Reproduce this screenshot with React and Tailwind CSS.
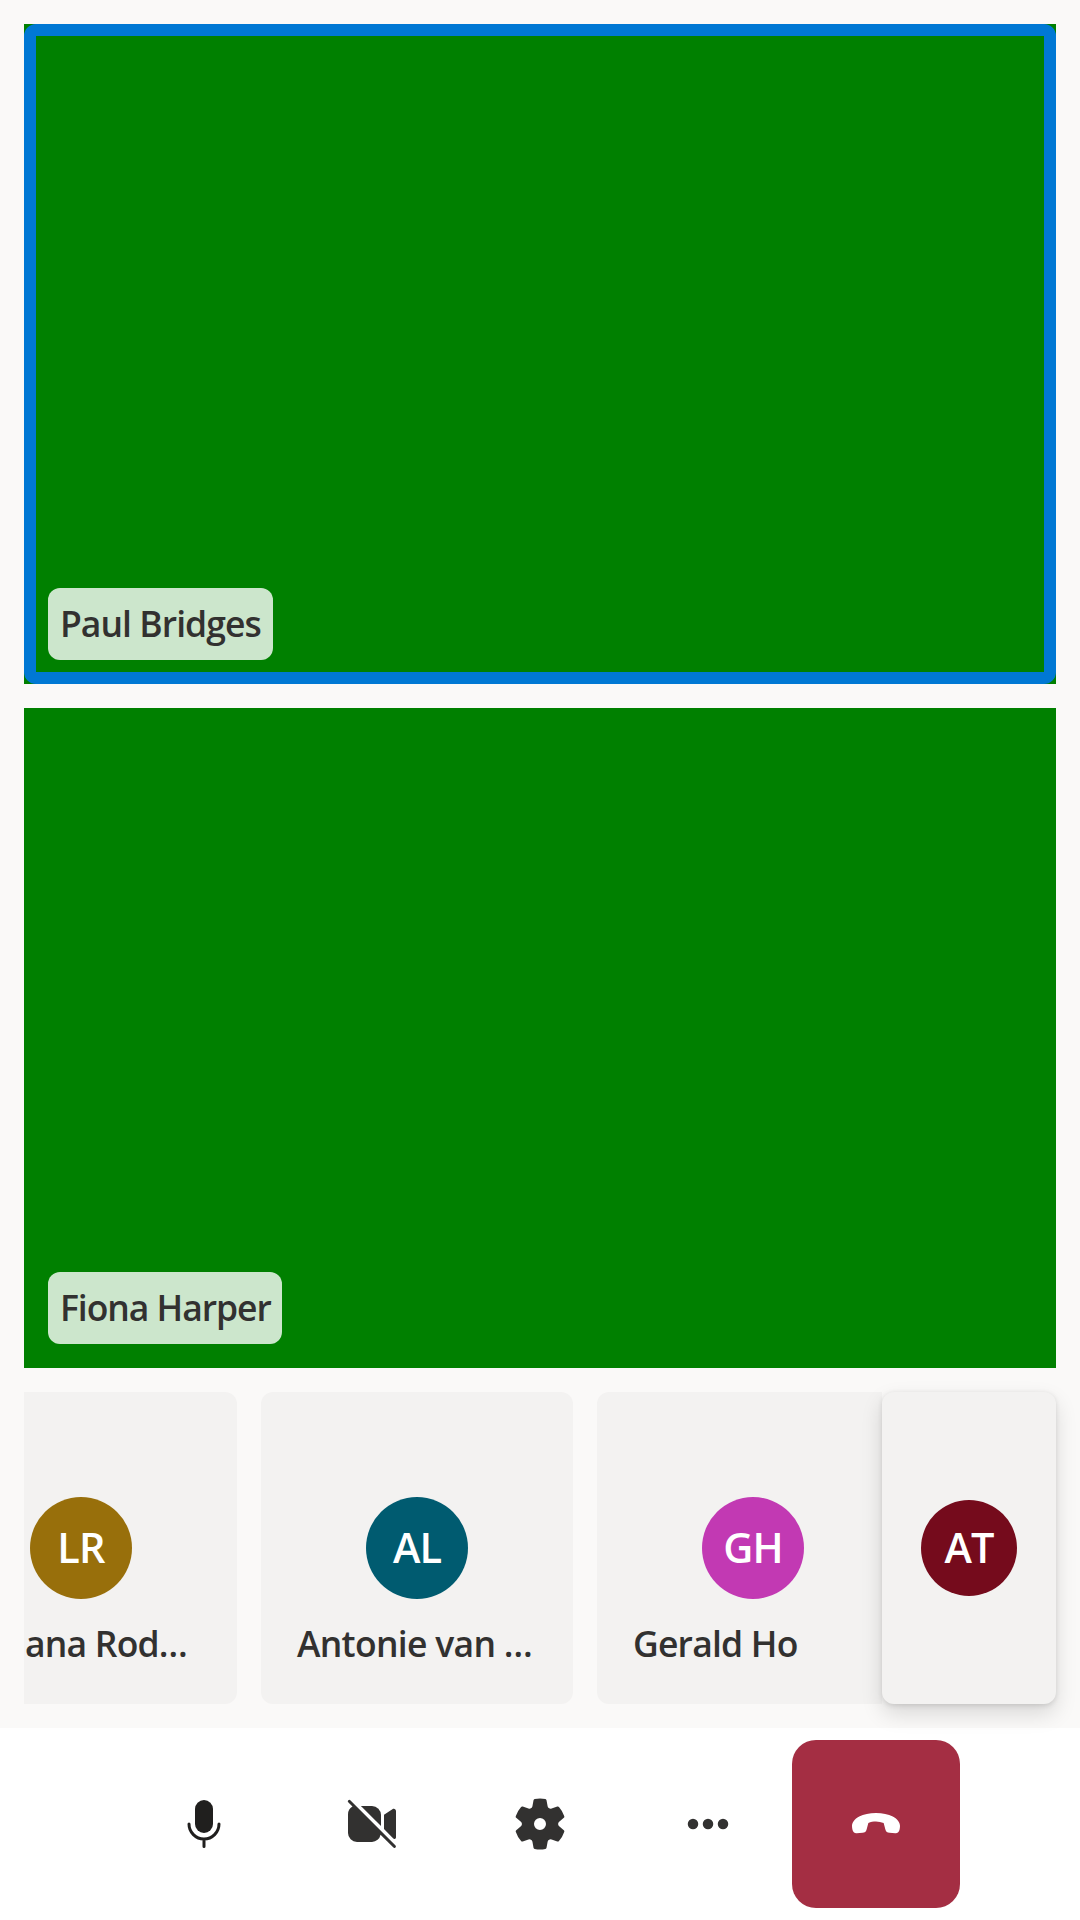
const remoteTiles = [
  { name: 'Paul Bridges', speaking: true, tracking: 'tracking-[-0.95px]', width: 'w-[225px]' },
  { name: 'Fiona Harper', speaking: false, tracking: 'tracking-[-1.05px]', width: 'w-[234px]' },
];

const audioTiles = [
  { name: 'ana Rod…', initials: 'LR', color: 'bg-[#986f0b]', tracking: 'pl-[64px] tracking-[-0.8px]' },
  { name: 'Antonie van …', initials: 'AL', color: 'bg-[#005b70]', tracking: 'tracking-[-0.7px]' },
  { name: 'Gerald Ho', initials: 'GH', color: 'bg-[#c239b3]', tracking: 'tracking-[-0.8px]' },
];

function VideoTile({ name, speaking, tracking, width }) {
  return (
    <div className="h-[660px] shrink-0 bg-[#008000]">
      <div
        className={`flex h-full items-end rounded-xl border-12 p-3 ${
          speaking ? 'border-[#0078d4]' : 'border-transparent'
        }`}
      >
        <div
          className={`flex h-[72px] items-center rounded-xl bg-white/80 px-3 pb-0.5 whitespace-nowrap text-[#323130] ${width}`}
        >
          <span className={`text-[35.5px] leading-12 font-[570] ${tracking}`}>{name}</span>
        </div>
      </div>
    </div>
  );
}

function AudioTile({ name, initials, color, tracking }) {
  return (
    <div className="flex h-[312px] w-[312px] shrink-0 flex-col rounded-xl bg-[#f3f2f1] px-9 pt-[105px]">
      <div
        className={`flex size-[102px] shrink-0 items-center justify-center self-center rounded-full pb-0.5 text-[41.5px] leading-[42px] font-[570] tracking-[-0.9px] text-white ${color}`}
      >
        {initials}
      </div>
      <div
        className={`mt-[19px] w-[240px] text-[35.5px] leading-[50px] font-[570] whitespace-nowrap text-[#323130] ${tracking}`}
      >
        {name}
      </div>
    </div>
  );
}

function Icon({ children, className = '' }) {
  return (
    <svg viewBox="0 0 20 20" className={`size-[60px] ${className}`} fill="currentColor" aria-hidden="true">
      {children}
    </svg>
  );
}

function ControlButton({ label, className = '', children }) {
  return (
    <button type="button" aria-label={label} className={`flex size-[168px] items-center justify-center ${className}`}>
      {children}
    </button>
  );
}

export default function App() {
  return (
    <div className="flex h-[1920px] w-[1080px] flex-col overflow-hidden bg-[#faf9f8] font-['Open_Sans','Noto_Sans',sans-serif]">
      <main className="flex h-[1728px] shrink-0 flex-col gap-6 p-6">
        {remoteTiles.map((tile) => (
          <VideoTile key={tile.name} {...tile} />
        ))}
        <div className="flex h-[312px]">
          <div className="flex w-[858px] shrink-0 justify-start gap-6 overflow-hidden">
            <div className="-ml-[99px] flex gap-6">
              {audioTiles.map((tile) => (
                <AudioTile key={tile.name} {...tile} />
              ))}
            </div>
          </div>
          <div className="relative z-10 flex w-[174px] shrink-0 items-center justify-center rounded-xl bg-[#f3f2f1] shadow-[0_9.6px_21.6px_rgba(0,0,0,0.132),0_1.8px_5.4px_rgba(0,0,0,0.108)]">
            <div className="flex size-24 items-center justify-center rounded-full bg-[#750b1c] pb-0.5 text-[41.5px] leading-[42px] font-[570] tracking-[-0.9px] text-white">
              AT
            </div>
          </div>
        </div>
      </main>

      <footer className="flex h-48 shrink-0 items-center justify-center bg-white text-[#323130]">
        <ControlButton label="Microphone">
          <Icon className="text-[#201f1e]">
            <rect x="7" y="2" width="6" height="11" rx="3" />
            <path
              d="M5 10a5 5 0 0 0 10 0M10 15.2v2.3"
              fill="none"
              stroke="currentColor"
              strokeLinecap="round"
            />
          </Icon>
        </ControlButton>
        <ControlButton label="Camera">
          <Icon>
            <path d="M2.85 2.15a.5.5 0 1 0-.7.7L3.5 4.2A3 3 0 0 0 2 6.8V13a3 3 0 0 0 3 3h5a3 3 0 0 0 2.84-2.45l4.3 4.3a.5.5 0 0 0 .71-.7l-15-15Z" />
            <path d="M6.3 4H10a3 3 0 0 1 3 3v3.7L6.3 4Z" />
            <path d="m14 11.7 3.1 3.15c.4.35.9.05.9-.45V5.75c0-.7-.65-1-1.2-.65L14 6.9v4.8Z" />
          </Icon>
        </ControlButton>
        <ControlButton label="Settings">
          <Icon>
            <path d="M1.91 7.38A8.5 8.5 0 0 1 3.7 4.3a.5.5 0 0 1 .54-.13l1.92.68a1 1 0 0 0 1.32-.76l.36-2a.5.5 0 0 1 .4-.4 8.53 8.53 0 0 1 3.55 0c.2.04.35.2.38.4l.37 2a1 1 0 0 0 1.32.76l1.92-.68a.5.5 0 0 1 .54.13 8.5 8.5 0 0 1 1.78 3.08c.06.2 0 .4-.15.54l-1.56 1.32a1 1 0 0 0 0 1.52l1.56 1.32a.5.5 0 0 1 .15.54 8.5 8.5 0 0 1-1.78 3.08.5.5 0 0 1-.54.13l-1.92-.68a1 1 0 0 0-1.32.76l-.37 2a.5.5 0 0 1-.38.4 8.53 8.53 0 0 1-3.56 0 .5.5 0 0 1-.39-.4l-.36-2a1 1 0 0 0-1.32-.76l-1.92.68a.5.5 0 0 1-.54-.13 8.5 8.5 0 0 1-1.78-3.08.5.5 0 0 1 .15-.54l1.56-1.32a1 1 0 0 0 0-1.52L2.06 7.92a.5.5 0 0 1-.15-.54ZM8 10a2 2 0 1 0 4 0 2 2 0 0 0-4 0Z" />
          </Icon>
        </ControlButton>
        <ControlButton label="More options">
          <Icon>
            <circle cx="5" cy="10" r="1.75" />
            <circle cx="10" cy="10" r="1.75" />
            <circle cx="15" cy="10" r="1.75" />
          </Icon>
        </ControlButton>
        <ControlButton label="Leave call" className="rounded-3xl bg-[#a42e43] text-white">
          <Icon>
            <path d="M10 6.3c2.2 0 4.1.4 5.6 1.2 1.6.85 2.4 2.05 2.4 3.2 0 .35-.05.7-.12 1.05-.18.9-.7 1.4-1.45 1.35l-1.95-.15c-.7-.05-1.15-.4-1.35-1.1l-.58-2.2A7.4 7.4 0 0 0 10 9.15c-.9 0-1.8.15-2.55.5l-.58 2.2c-.2.7-.65 1.05-1.35 1.1l-1.95.15c-.75.05-1.27-.45-1.45-1.35A5 5 0 0 1 2 10.7c0-1.15.8-2.35 2.4-3.2C5.9 6.7 7.8 6.3 10 6.3Z" />
          </Icon>
        </ControlButton>
      </footer>
    </div>
  );
}
